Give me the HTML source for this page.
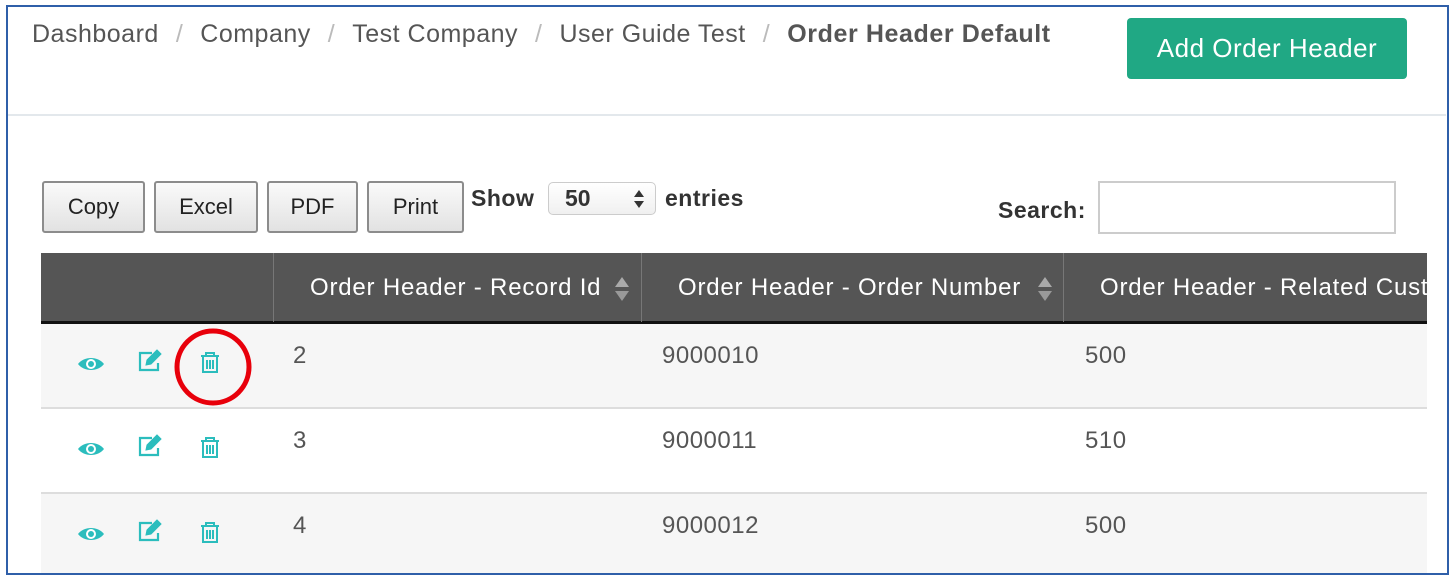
<!DOCTYPE html>
<html><head><meta charset="utf-8"><style>
*{margin:0;padding:0;box-sizing:border-box}
body{width:1454px;height:580px;background:#fff;position:relative;overflow:hidden;font-family:"Liberation Sans",Arial,sans-serif;color:#555}
.a{position:absolute}
.frame{left:6px;top:5px;width:1443px;height:570px;border:2px solid #2f5fa9;}
.crumb{left:32px;top:20px;font-size:25px;letter-spacing:0.5px;color:#555;white-space:nowrap}
.crumb .s{color:#bbb;margin:0 17px}
.crumb b{color:#555;letter-spacing:0.6px}
.hr{left:8px;top:114px;width:1438px;height:2px;background:#e3e8ec}
.add{left:1127px;top:18px;width:280px;height:61px;background:#20a884;border-radius:4px;color:#fff;font-size:26px;letter-spacing:0.5px;text-align:center;line-height:61px}
.btn{top:181px;height:52px;border:2px solid #8c8c8c;border-radius:3px;background:linear-gradient(#fafafa,#e2e2e2);color:#222;font-size:22px;text-align:center;line-height:48px}
.lbl{font-size:23px;letter-spacing:0.5px;font-weight:bold;color:#333}
.sel{left:548px;top:182px;width:108px;height:33px;border:1px solid #ccc;border-radius:5px;background:linear-gradient(#fff,#f0f0f0);font-size:23px;font-weight:bold;color:#333;padding-left:16px;line-height:31px}
.inp{left:1098px;top:181px;width:298px;height:53px;border:2px solid #ccc;background:#fff}
.th{left:41px;top:253px;width:1386px;height:69px;background:#555}
.thb{left:41px;top:321px;width:1386px;height:3px;background:#111}
.thc{top:253px;height:69px;color:#fff;font-size:24px;letter-spacing:0.8px;line-height:69px;white-space:nowrap;overflow:hidden}
.vl{top:253px;width:1px;height:69px;background:#777}
.row{left:41px;width:1386px}
.td{font-size:24px;letter-spacing:0.5px;color:#555}
.sep{left:41px;width:1386px;height:2px;background:#ddd}
</style></head><body>
<div class="a frame"></div>
<div class="a crumb">Dashboard<span class="s">/</span>Company<span class="s">/</span>Test Company<span class="s">/</span>User Guide Test<span class="s">/</span><b>Order Header Default</b></div>
<div class="a add">Add Order Header</div>
<div class="a hr"></div>
<div class="a btn" style="left:42px;width:103px">Copy</div>
<div class="a btn" style="left:154px;width:104px">Excel</div>
<div class="a btn" style="left:267px;width:91px">PDF</div>
<div class="a btn" style="left:367px;width:97px">Print</div>
<div class="a lbl" style="left:471px;top:185px">Show</div>
<div class="a sel">50<svg class="a" style="left:84px;top:6px" width="12" height="20" viewBox="0 0 12 20"><path d="M6 1L11 8H1Z M6 19L11 12H1Z" fill="#333"/></svg></div>
<div class="a lbl" style="left:665px;top:185px">entries</div>
<div class="a lbl" style="left:998px;top:197px">Search:</div>
<div class="a inp"></div>
<div class="a th"></div><div class="a thb"></div>
<div class="a vl" style="left:273px"></div><div class="a vl" style="left:641px"></div><div class="a vl" style="left:1063px"></div>
<div class="a thc" style="left:310px">Order Header - Record Id</div>
<div class="a thc" style="left:678px">Order Header - Order Number</div>
<div class="a thc" style="left:1100px;width:327px">Order Header - Related Customer</div>
<svg class="a" style="left:613px;top:276px" width="18" height="26" viewBox="0 0 18 26"><path d="M9 1L16 11H2Z" fill="#aaa"/><path d="M9 25L16 15H2Z" fill="#999"/></svg>
<svg class="a" style="left:1036px;top:276px" width="18" height="26" viewBox="0 0 18 26"><path d="M9 1L16 11H2Z" fill="#aaa"/><path d="M9 25L16 15H2Z" fill="#999"/></svg>
<div class="a row" style="top:324px;height:83px;background:#f6f6f6"></div>
<div class="a sep" style="top:407px"></div>
<div class="a row" style="top:409px;height:83px;background:#fff"></div>
<div class="a sep" style="top:492px"></div>
<div class="a row" style="top:494px;height:79px;background:#f6f6f6"></div>
<div class="a td" style="left:293px;top:342px">2</div><div class="a td" style="left:662px;top:342px">9000010</div><div class="a td" style="left:1085px;top:342px">500</div>
<div class="a td" style="left:293px;top:427px">3</div><div class="a td" style="left:662px;top:427px">9000011</div><div class="a td" style="left:1085px;top:427px">510</div>
<div class="a td" style="left:293px;top:512px">4</div><div class="a td" style="left:662px;top:512px">9000012</div><div class="a td" style="left:1085px;top:512px">500</div>
<svg class="a" style="left:0;top:0" width="1454" height="580">
<defs><g id="ic">
<path d="M-13 0C-7-8 7-8 13 0C7 8-7 8-13 0Z" fill="#2bbdbd"/><circle cx="0" cy="0" r="5" fill="#fff"/><circle cx="0" cy="0" r="3" fill="#2bbdbd"/>
<g transform="translate(59,-3)" fill="none" stroke="#2bbdbd" stroke-width="2.2"><path d="M2-8H-10V9H8V2"/><path d="M-4 4L-3-1L7-11L11-7L1 3Z" fill="#2bbdbd" stroke-width="1"/></g>
<g transform="translate(119,-1)" fill="none" stroke="#2bbdbd" stroke-width="2"><path d="M-9-7H9M-4-7V-10H4V-7M-7-7V9H7V-7M-3-3V6M0-3V6M3-3V6"/></g>
</g></defs>
<use href="#ic" x="91" y="364"/><use href="#ic" x="91" y="449"/><use href="#ic" x="91" y="534"/>
<circle cx="213" cy="367" r="36" fill="none" stroke="#e8000b" stroke-width="5"/>
</svg>
</body></html>
